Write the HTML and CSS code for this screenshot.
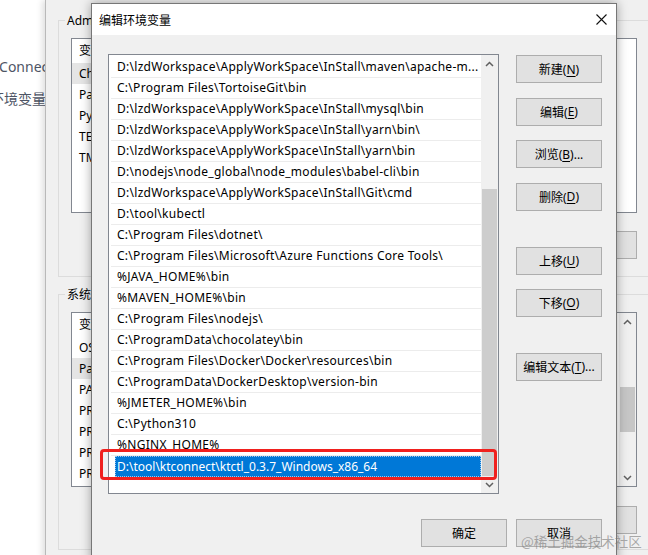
FILE: index.html
```html
<!DOCTYPE html>
<html lang="zh-CN">
<head>
<meta charset="utf-8">
<title>编辑环境变量</title>
<link rel="stylesheet" href="styles.css">
</head>
<body>
<div class="desktop">
  <div class="page">
    <div class="page-line line-1">tConnect</div>
    <div class="page-line line-2">环境变量</div>
  </div>

  <div class="win-env">
    <fieldset class="group">
      <legend>Administrator 的用户变量(U)</legend>
      <div class="vlist">
        <div class="vrows">
          <div class="vrow vhead"><span class="vcell">变量</span></div>
          <div class="vrow"><span class="vcell hl">ChocolateyLastPathUpdate</span></div>
          <div class="vrow"><span class="vcell">Path</span></div>
          <div class="vrow"><span class="vcell">PyCharm Community Edition</span></div>
          <div class="vrow"><span class="vcell">TEMP</span></div>
          <div class="vrow"><span class="vcell">TMP</span></div>
        </div>
      </div>
      <div class="vbtns">
        <button class="btn">新建(N)...</button>
        <button class="btn">编辑(E)...</button>
        <button class="btn">删除(D)</button>
      </div>
    </fieldset>
    <fieldset class="group group-sys">
      <legend>系统变量(S)</legend>
      <div class="vlist">
        <div class="vrows">
          <div class="vrow vhead"><span class="vcell">变量</span></div>
          <div class="vrow"><span class="vcell">OS</span></div>
          <div class="vrow"><span class="vcell hl">Path</span></div>
          <div class="vrow"><span class="vcell">PATHEXT</span></div>
          <div class="vrow"><span class="vcell">PROCESSOR_ARCHITECTURE</span></div>
          <div class="vrow"><span class="vcell">PROCESSOR_IDENTIFIER</span></div>
          <div class="vrow"><span class="vcell">PROCESSOR_LEVEL</span></div>
          <div class="vrow"><span class="vcell">PROCESSOR_REVISION</span></div>
        </div>
        <div class="sbar">
          <div class="sbtn"><svg width="9" height="6" viewBox="0 0 9 6"><polyline points="1,5 4.5,1.5 8,5" fill="none" stroke="#606060" stroke-width="1.5"/></svg></div>
          <div class="strack strack-sys"><div class="sthumb sthumb-sys"></div></div>
          <div class="sbtn"><svg width="9" height="6" viewBox="0 0 9 6"><polyline points="1,1 4.5,4.5 8,1" fill="none" stroke="#606060" stroke-width="1.5"/></svg></div>
        </div>
      </div>
      <div class="vbtns">
        <button class="btn">新建(W)...</button>
        <button class="btn">编辑(I)...</button>
        <button class="btn">删除(L)</button>
      </div>
    </fieldset>
  </div>

  <div class="dlg">
    <div class="titlebar">
      <span class="title">编辑环境变量</span>
      <span class="close"><svg width="11" height="11" viewBox="0 0 11 11"><path d="M0.5 0.5 L10.5 10.5 M10.5 0.5 L0.5 10.5" stroke="#111" stroke-width="1.1" fill="none"/></svg></span>
    </div>
    <div class="dlg-body">
      <div class="dlg-main">
        <div class="plist">
          <div class="prows">
            <div class="prow">D:\lzdWorkspace\ApplyWorkSpace\InStall\maven\apache-m...</div>
            <div class="prow">C:\Program Files\TortoiseGit\bin</div>
            <div class="prow">D:\lzdWorkspace\ApplyWorkSpace\InStall\mysql\bin</div>
            <div class="prow">D:\lzdWorkspace\ApplyWorkSpace\InStall\yarn\bin\</div>
            <div class="prow">D:\lzdWorkspace\ApplyWorkSpace\InStall\yarn\bin</div>
            <div class="prow">D:\nodejs\node_global\node_modules\babel-cli\bin</div>
            <div class="prow">D:\lzdWorkspace\ApplyWorkSpace\InStall\Git\cmd</div>
            <div class="prow">D:\tool\kubectl</div>
            <div class="prow">C:\Program Files\dotnet\</div>
            <div class="prow">C:\Program Files\Microsoft\Azure Functions Core Tools\</div>
            <div class="prow">%JAVA_HOME%\bin</div>
            <div class="prow">%MAVEN_HOME%\bin</div>
            <div class="prow">C:\Program Files\nodejs\</div>
            <div class="prow">C:\ProgramData\chocolatey\bin</div>
            <div class="prow">C:\Program Files\Docker\Docker\resources\bin</div>
            <div class="prow">C:\ProgramData\DockerDesktop\version-bin</div>
            <div class="prow">%JMETER_HOME%\bin</div>
            <div class="prow">C:\Python310</div>
            <div class="prow">%NGINX_HOME%</div>
            <div class="prow sel">D:\tool\ktconnect\ktctl_0.3.7_Windows_x86_64</div>
          </div>
          <div class="sbar">
            <div class="sbtn"><svg width="9" height="6" viewBox="0 0 9 6"><polyline points="1,5 4.5,1.5 8,5" fill="none" stroke="#606060" stroke-width="1.5"/></svg></div>
            <div class="strack"><div class="sthumb"></div></div>
            <div class="sbtn"><svg width="9" height="6" viewBox="0 0 9 6"><polyline points="1,1 4.5,4.5 8,1" fill="none" stroke="#606060" stroke-width="1.5"/></svg></div>
          </div>
        </div>
        <div class="side">
          <div class="bgroup g1">
            <button class="btn">新建(<u>N</u>)</button>
            <button class="btn">编辑(<u>E</u>)</button>
            <button class="btn">浏览(<u>B</u>)...</button>
            <button class="btn">删除(<u>D</u>)</button>
          </div>
          <div class="bgroup g2">
            <button class="btn">上移(<u>U</u>)</button>
            <button class="btn">下移(<u>O</u>)</button>
          </div>
          <div class="bgroup g3">
            <button class="btn">编辑文本(<u>T</u>)...</button>
          </div>
        </div>
      </div>
      <div class="foot">
        <button class="btn">确定</button>
        <button class="btn">取消</button>
      </div>
    </div>
  </div>

  <div class="redbox"></div>
  <div class="watermark">@稀土掘金技术社区</div>
</div>
</body>
</html>
```

FILE: styles.css
```css
html, body {
  margin: 0;
  padding: 0;
}
body {
  width: 648px;
  height: 555px;
  overflow: hidden;
  font-family: "Noto Sans", "Noto Sans CJK SC", sans-serif;
  font-size: 12px;
  color: #000;
}
.desktop {
  position: relative;
  width: 648px;
  height: 555px;
  background: #fff;
  overflow: hidden;
}

/* page behind */
.page {
  display: flex;
  flex-direction: column;
  gap: 12px;
  padding-top: 57px;
  font-size: 14px;
  line-height: 20px;
  color: #4e5565;
  white-space: nowrap;
}
.line-1 { margin-left: -6px; }
.line-2 { margin-left: -10px; }

/* background environment window */
.win-env {
  position: absolute;
  left: 45px;
  top: 0;
  width: 640px;
  height: 560px;
  box-sizing: border-box;
  background: #f0f0f0;
  border-left: 1px solid #b9b9b9;
  box-shadow: -3px 0 6px rgba(0, 0, 0, 0.12);
  padding: 12px 0 0 12px;
}
.group {
  margin: 0;
  width: 592px;
  box-sizing: border-box;
  min-width: 0;
  border: 1px solid #dcdcdc;
  padding: 9px 12px 17px 12px;
}
.group legend {
  margin-left: -6px;
  padding: 0 2px;
  font-size: 12px;
  line-height: 17px;
}
.group-sys {
  margin-top: 9px;
  padding-bottom: 15px;
}
.vlist {
  height: 175px;
  box-sizing: border-box;
  border: 1px solid #828790;
  background: #fff;
  display: flex;
}
.vrows {
  flex: 1;
}
.vrow {
  height: 21px;
  line-height: 21px;
  white-space: nowrap;
  display: flex;
}
.vcell {
  width: 200px;
  padding-left: 7px;
}
.vhead {
  height: 24px;
  line-height: 24px;
}
.vcell.hl {
  background: #e5e5e5;
}
.vbtns {
  display: flex;
  justify-content: flex-end;
  gap: 9px;
  margin-top: 18px;
}
.group-sys .vbtns {
  margin-top: 19px;
}

/* buttons */
.btn {
  width: 86px;
  height: 28px;
  box-sizing: border-box;
  border: 1px solid #adadad;
  background: #e1e1e1;
  font-family: "Noto Sans", "Noto Sans CJK SC", sans-serif;
  font-size: 12px;
  color: #000;
  padding: 0;
  margin: 0;
  display: flex;
  align-items: center;
  justify-content: center;
  white-space: nowrap;
}
.btn u {
  text-underline-offset: 2px;
}

/* scrollbar */
.sbar {
  width: 17px;
  display: flex;
  flex-direction: column;
  background: #f0f0f0;
}
.sbtn {
  height: 17px;
  display: flex;
  align-items: center;
  justify-content: center;
}
.strack {
  flex: 1;
  display: flex;
  flex-direction: column;
  justify-content: flex-end;
  padding: 0 1px;
}
.sthumb {
  height: 287px;
  background: #cdcdcd;
}
.strack-sys {
  justify-content: flex-start;
}
.sthumb-sys {
  height: 45px;
  margin-top: 57px;
  background: #c6c6c6;
}

/* foreground dialog */
.dlg {
  position: absolute;
  left: 91px;
  top: 3px;
  width: 526px;
  height: 560px;
  box-sizing: border-box;
  border: 1px solid #777;
  background: #f0f0f0;
  box-shadow: 0 0 10px rgba(0, 0, 0, 0.35);
  display: flex;
  flex-direction: column;
}
.titlebar {
  height: 31px;
  background: #fff;
  display: flex;
  align-items: center;
  justify-content: space-between;
  padding-left: 7px;
}
.title {
  font-family: "Noto Sans CJK SC", sans-serif;
  font-size: 12px;
  line-height: 16px;
}
.close {
  width: 30px;
  height: 30px;
  display: flex;
  align-items: center;
  justify-content: center;
}
.dlg-body {
  padding: 19px 14px 0 16px;
}
.dlg-main {
  display: flex;
  gap: 17px;
}
.plist {
  width: 391px;
  height: 440px;
  box-sizing: border-box;
  border: 1px solid #828790;
  background: #fff;
  display: flex;
}
.prows {
  flex: 1;
  padding: 2px 0 0 2px;
  min-width: 0;
}
.prow {
  height: 20px;
  line-height: 20px;
  border-bottom: 1px solid #ececec;
  padding-left: 6px;
  white-space: nowrap;
  overflow: hidden;
  letter-spacing: 0.28px;
}
.prow.sel {
  margin-left: 4px;
  padding-left: 1px;
  background: #0078d7;
  color: #fff;
  border: 1px dotted #9cc8ee;
  height: 19px;
  line-height: 19px;
  letter-spacing: 0;
}
.side {
  display: flex;
  flex-direction: column;
  padding-top: 1px;
}
.bgroup {
  display: flex;
  flex-direction: column;
}
.g1 { gap: 14.67px; }
.g2 { gap: 14px; margin-top: 36px; }
.g3 { margin-top: 36px; }
.foot {
  display: flex;
  justify-content: flex-end;
  gap: 9px;
  margin-top: 25px;
}

/* overlays */
.redbox {
  position: absolute;
  left: 100px;
  top: 449px;
  width: 397px;
  height: 31px;
  box-sizing: border-box;
  border: 3px solid #f0201e;
  border-radius: 4px;
}
.watermark {
  position: absolute;
  left: 521px;
  top: 533px;
  font-family: "Noto Sans CJK SC", sans-serif;
  font-size: 13.5px;
  line-height: 17px;
  color: rgba(120, 120, 120, 0.6);
  white-space: nowrap;
}
```
